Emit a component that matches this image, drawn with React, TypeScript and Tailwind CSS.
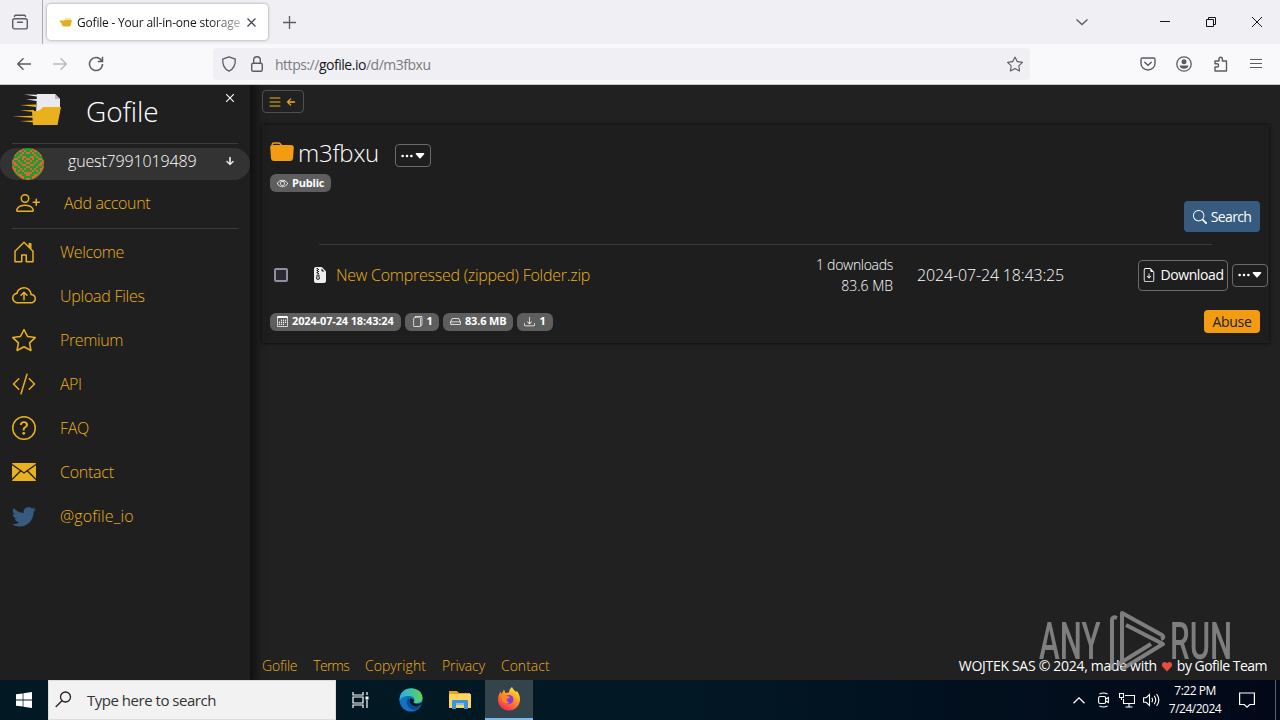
import type { ReactNode } from "react";
import {
  BsArrowDownShort,
  BsArrowLeftShort,
  BsCalendar3,
  BsCaretDownFill,
  BsCloudArrowUp,
  BsCodeSlash,
  BsDownload,
  BsEye,
  BsFileEarmarkArrowDown,
  BsFileEarmarkZipFill,
  BsFiles,
  BsHdd,
  BsHouseDoor,
  BsList,
  BsPersonPlus,
  BsQuestionCircle,
  BsSearch,
  BsStar,
  BsThreeDots,
  BsTwitter,
} from "react-icons/bs";

function EnvelopeIcon() {
  return (
    <svg viewBox="0 0 24 24">
      <rect y="3" width="24" height="18" rx="1" fill="#eab11f" />
      <path d="M0 4.500l12 8.500 12-8.500M0 19.500l8.500-8.500M24 19.500L15.500 11" fill="none" stroke="#1f1f1f" strokeWidth="1.300" />
    </svg>
  );
}

const navItems = [
  { label: "Welcome", icon: <BsHouseDoor />, className: "tracking-[-0.4px]" },
  { label: "Upload Files", icon: <BsCloudArrowUp />, className: "tracking-[-0.25px]" },
  { label: "Premium", icon: <BsStar />, className: "tracking-[-0.4px]" },
  { label: "API", icon: <BsCodeSlash />, className: "tracking-[-0.5px]" },
  { label: "FAQ", icon: <BsQuestionCircle />, className: "tracking-[-0.3px]" },
  { label: "Contact", icon: <EnvelopeIcon />, className: "tracking-[-0.25px]" },
  { label: "@gofile_io", icon: <BsTwitter className="text-[#375a7f]" />, className: "tracking-[0.15px]" },
];

const footerLinks = [
  { label: "Gofile", className: "tracking-[-0.2px]" },
  { label: "Terms", className: "tracking-[-0.75px]" },
  { label: "Copyright", className: "tracking-[0.05px]" },
  { label: "Privacy", className: "tracking-[-0.1px]" },
  { label: "Contact", className: "tracking-[0px]" },
];

// left half of the identicon, mirrored when drawn
const avatarRows = [
  "00000100",
  "00011010",
  "00100101",
  "01001000",
  "00010110",
  "01100101",
  "10010010",
  "11001001",
  "01100110",
  "10010001",
  "11001010",
  "01010100",
  "00100011",
  "00011001",
  "00001100",
  "00000101",
];

function BrowserTabs() {
  return (
    <div className="flex h-11 bg-[#f0f0f4] text-[#5b5b66]">
      <div className="flex w-[43px] items-center justify-center border-r border-[#a9a9b2] pr-[2px]">
        <svg className="size-4" viewBox="0 0 16 16" fill="none" stroke="currentColor" strokeWidth="1.4">
          <rect x="0.7" y="4.7" width="14.6" height="10.2" rx="2" />
          <path d="M2.5 2.5q0-1.3 1.3-1.3h8.4q1.3 0 1.3 1.3M5.5 8.2h5" strokeLinecap="round" />
        </svg>
      </div>
      <div className="ml-[4px] mt-[4px] flex h-[36px] w-[221px] items-center rounded bg-white pl-3 shadow-[0_0_3px_rgba(0,0,0,0.4)]">
        <svg className="h-3 w-[13px] shrink-0" viewBox="0 0 13 12">
          <path d="M6 2h6v5H6z" fill="#f5e3a8" />
          <path d="M0 4.500h5l1-.5h6.500q.5 0 .3 1l-1 4q-.4 1.500-2 1.500H5q-1.500 0-2-1.500L2.300 7z" fill="#e0b022" />
        </svg>
        <div className="ml-[5px] mt-[2px] w-[164px] overflow-hidden whitespace-nowrap bg-gradient-to-r from-[#15141a] from-80% to-[#15141a]/30 bg-clip-text text-xs tracking-[-0.2px] text-transparent">
          Gofile - Your all-in-one storage
        </div>
        <svg className="ml-[6px] size-[9px] shrink-0" viewBox="0 0 9 9" stroke="#42414d" strokeWidth="1.2">
          <path d="M.5.5l8 8M8.500.5l-8 8" />
        </svg>
      </div>
      <svg className="ml-[15px] mt-4 size-[13px]" viewBox="0 0 13 13" stroke="currentColor" strokeWidth="1.3">
        <path d="M6.500 0v13M0 6.500h13" />
      </svg>
      <div className="ml-auto flex items-center text-[#15141a]">
        <svg className="h-2 w-3" viewBox="0 0 12 8" fill="none" stroke="#5b5b66" strokeWidth="1.4">
          <path d="M.5 1.500l5.500 5 5.500-5" />
        </svg>
        <svg className="ml-[72px] h-[10px] w-[10px]" viewBox="0 0 10 10" stroke="currentColor">
          <path d="M0 4.500h10" />
        </svg>
        <svg className="ml-9 size-[10px]" viewBox="0 0 10 10" fill="none" stroke="currentColor">
          <path d="M.5 2.500h7v7h-7zM2.500 2.500v-2h7v7h-2" />
        </svg>
        <svg className="ml-9 mr-[18px] size-[10px]" viewBox="0 0 10 10" stroke="currentColor">
          <path d="M0 0l10 10M10 0L0 10" />
        </svg>
      </div>
    </div>
  );
}

function BrowserToolbar() {
  return (
    <div className="flex h-10 items-center bg-[#f9f9fb] text-[#5b5b66]">
      <svg className="ml-[17px] size-[14px]" viewBox="0 0 14 14" fill="none" stroke="currentColor" strokeWidth="1.4">
        <path d="M14 7H.8M6.500 1.200L.8 7l5.700 5.800" />
      </svg>
      <svg className="ml-[22px] size-[14px] opacity-40" viewBox="0 0 14 14" fill="none" stroke="currentColor" strokeWidth="1.4">
        <path d="M0 7h13.200M7.500 1.200L13.200 7l-5.700 5.800" />
      </svg>
      <svg className="ml-[21px] size-4" viewBox="0 0 16 16" fill="none" stroke="currentColor" strokeWidth="1.5">
        <path d="M13.500 4.600A6.500 6.500 0 1 0 14.500 8M14.500.8v4.700H9.800" />
      </svg>
      <div className="ml-[109px] flex h-8 w-[817px] items-center rounded bg-[#f0f0f4] pl-2">
        <svg className="size-4" viewBox="0 0 16 16" fill="none" stroke="currentColor" strokeWidth="1.3">
          <path d="M8 .8l6.300 2.400c.3 5.300-1.500 9.600-6.300 12C3.200 12.800 1.400 8.500 1.700 3.200z" strokeLinejoin="round" />
        </svg>
        <svg className="ml-3 size-4" viewBox="0 0 16 16" fill="none" stroke="currentColor" strokeWidth="1.4">
          <rect x="2.700" y="7.200" width="10.600" height="8" rx="1.500" />
          <path d="M4.700 7V4a3.300 3.300 0 0 1 6.600 0v3" />
        </svg>
        <span className="ml-[10px] mt-[2px] text-sm tracking-[-0.48px] text-[#7a7a82]">
          https://<span className="text-[#15141a]">gofile.io</span>/d/m3fbxu
        </span>
        <BsStar className="ml-auto mr-[7px] size-4" />
      </div>
      <div className="ml-auto flex items-center gap-5 pr-4">
        <svg className="size-4" viewBox="0 0 16 16" fill="none" stroke="currentColor" strokeWidth="1.4" strokeLinecap="round">
          <path d="M2.500 2h11q1.500 0 1.500 1.500V7.500a7 6.500 0 0 1-14 0v-4Q1 2 2.500 2z" />
          <path d="M4.700 6.300L8 9.300l3.300-3" />
        </svg>
        <svg className="size-4" viewBox="0 0 16 16" fill="none" stroke="currentColor" strokeWidth="1.3">
          <circle cx="8" cy="8" r="7.200" />
          <circle cx="8" cy="5.800" r="2.500" fill="currentColor" stroke="none" />
          <path d="M3.500 9.500h9q-.8 3.300-4.500 3.300t-4.500-3.300z" fill="currentColor" stroke="none" />
        </svg>
        <svg className="size-4" viewBox="0 0 16 16" fill="none" stroke="currentColor" strokeWidth="1.4" strokeLinejoin="round">
          <path d="M3 5h4V3a1.700 1.700 0 0 1 3.400 0v2H14.500v10H3v-4h2a1.600 1.600 0 0 0 0-3.200H3z" />
        </svg>
        <svg className="size-4" viewBox="0 0 16 16" stroke="currentColor" strokeWidth="1.200">
          <path d="M2 3.500h12M2 7.500h12M2 11.500h12" />
        </svg>
      </div>
    </div>
  );
}

function GofileLogo() {
  return (
    <svg className="h-[34px] w-[50px]" viewBox="0 0 50 34">
      <path d="M25 1h18l5 5v14H24z" fill="#e9e9ee" />
      <path d="M43 1v5h5z" fill="#b9b9c4" />
      <path d="M20 18h5l3-1 3-3h18l-3.500 18H21z" fill="#eab11f" />
      <path d="M8 12l16-.5v2.500zM8 17.500l14-.500v2zM0 23.500l21-.7v2zM8 28l14-.5v2z" fill="#eab11f" />
      <path d="M12 1.500l14 .2v2zM14 6.500l11-.5v2z" fill="#e9e9ee" />
    </svg>
  );
}

function Avatar() {
  return (
    <svg className="size-8 rounded-full" viewBox="0 0 16 16" shapeRendering="crispEdges">
      <rect width="16" height="16" fill="#1f9a35" />
      {avatarRows.map((row, y) =>
        row.split("").map((cell, x) =>
          cell === "1" ? (
            <g key={`${x}-${y}`} fill="#e0662c">
              <rect x={x} y={y} width="1" height="1" />
              <rect x={15 - x} y={y} width="1" height="1" />
            </g>
          ) : null
        )
      )}
    </svg>
  );
}

function Sidebar() {
  return (
    <aside className="z-10 w-[250px] shrink-0 bg-[#1f1f1f] text-[#eab11f] shadow-[3px_0_8px_3px_rgba(0,0,0,0.5)]">
      <div className="mx-3 flex h-[59px] items-start border-b border-[#3c3c3c] pt-2">
        <GofileLogo />
        <span className="ml-6 mt-[4px] text-[28px] leading-7 font-light tracking-[-0.1px] text-white">Gofile</span>
        <svg className="ml-auto mr-1 mt-[1px] size-2" viewBox="0 0 8 8" stroke="#fff" strokeWidth="1.1">
          <path d="M0 0l8 8M8 0L0 8" />
        </svg>
      </div>
      <div className="mt-1 flex h-8 items-center rounded-full bg-[#333] pl-3 text-white">
        <Avatar />
        <span className="ml-6 mb-[6px] font-light tracking-[-0.15px]">guest7991019489</span>
        <BsArrowDownShort className="ml-auto mr-3 mb-[6px] size-4" stroke="currentColor" strokeWidth="0.5" />
      </div>
      <div className="mx-3 flex h-[49px] items-center border-b border-[#3c3c3c] pb-[3px]">
        <BsPersonPlus className="ml-1 size-6" />
        <span className="ml-6 font-light tracking-[-0.35px]">Add account</span>
      </div>
      <nav className="pt-[1px]">
        {navItems.map((item) => (
          <a key={item.label} className="flex h-11 items-center pl-3 [&>svg]:size-6">
            {item.icon}
            <span className={`ml-6 mb-[1px] font-light ${item.className}`}>{item.label}</span>
          </a>
        ))}
      </nav>
    </aside>
  );
}

function Badge({ icon, children }: { icon: ReactNode; children: ReactNode }) {
  return (
    <span className="flex h-[18px] items-center gap-1 rounded-md bg-[#5e5e5e] px-[7px] text-[11px] font-bold text-white">
      {icon}
      {children}
    </span>
  );
}

function MenuButton() {
  return (
    <button className="flex h-[23px] w-9 items-center justify-center rounded border border-[#6a6a6a] text-white">
      <BsThreeDots className="size-[14px]" />
      <BsCaretDownFill className="size-3" />
    </button>
  );
}

function FolderCard() {
  return (
    <section className="h-[218px] w-[1007px] bg-[#1e1e1e] px-2 pt-3 shadow-[0_0_4px_rgba(0,0,0,0.8)]">
      <div className="flex h-8 items-center">
        <svg className="mb-[2px] size-6" viewBox="0 0 24 24" fill="#f39c12">
          <path d="M2 5.500Q2 3 4 3h4.500q1 0 2 1l1 1" fill="none" stroke="#f39c12" strokeWidth="1.300" />
          <path d="M3 5h18q3 0 2.800 3l-.8 10.500q-.3 2.500-3 2.500H4q-2.700 0-3-2.500L.2 7Q0 5 3 5z" />
        </svg>
        <span className="mb-[1px] ml-1 w-[81px] text-2xl font-light tracking-[-0.25px] text-white">m3fbxu</span>
        <span className="ml-4 mt-[5px]">
          <MenuButton />
        </span>
      </div>
      <div className="mt-[5px] flex">
        <Badge icon={<BsEye className="size-[11px]" />}>
          <span className="tracking-[-0.2px]">Public</span>
        </Badge>
      </div>
      <div className="mr-[1px] mt-[9px] flex justify-end">
        <button className="flex h-[31px] w-[76px] items-center justify-center gap-1 rounded bg-[#375a7f] text-sm text-white">
          <BsSearch className="size-[14px]" />
          <span className="tracking-[-0.6px]">Search</span>
        </button>
      </div>
      <hr className="ml-[49px] mr-[49px] mt-3 border-[#3a3a3a]" />
      <div className="-mr-2 flex h-[60px] items-center pr-[1px] text-white">
        <span className="ml-1 size-[14px] rounded-[2px] border-2 border-[#8f8f9d] bg-[#2b2a33]" />
        <BsFileEarmarkZipFill className="ml-6 size-4 text-[#eee]" />
        <span className="ml-2 font-light tracking-[-0.25px] text-[#eab11f]">New Compressed (zipped) Folder.zip</span>
        <div className="ml-auto text-right text-sm leading-[21px] font-light">
          <div className="tracking-[-0.3px]">1 downloads</div>
          <div>83.6 MB</div>
        </div>
        <span className="ml-6 w-[221px] font-light tracking-[-0.15px]">2024-07-24 18:43:25</span>
        <button className="flex h-[31px] w-[90px] items-center justify-center gap-1 rounded border border-[#6a6a6a] text-sm">
          <BsFileEarmarkArrowDown className="size-[14px]" />
          <span className="tracking-[-0.4px]">Download</span>
        </button>
        <span className="ml-1">
          <MenuButton />
        </span>
      </div>
      <div className="mt-[5px] flex items-center gap-1">
        <Badge icon={<BsCalendar3 className="size-[11px]" />}>
          <span className="tracking-[-0.14px]">2024-07-24 18:43:24</span>
        </Badge>
        <Badge icon={<BsFiles className="size-[11px]" />}>
          <span className="-mr-[1px]">1</span>
        </Badge>
        <Badge icon={<BsHdd className="size-[11px]" />}>
          <span className="tracking-[-0.15px]">83.6 MB</span>
        </Badge>
        <Badge icon={<BsDownload className="size-[11px]" />}>1</Badge>
        <button className="ml-auto mr-[1px] h-[23px] w-14 rounded bg-[#f39c12] text-sm tracking-[-0.3px] text-[#222]">
          Abuse
        </button>
      </div>
    </section>
  );
}

function Watermark() {
  return (
    <div className="absolute right-0 bottom-0 flex h-[74px] w-[241px] pt-1 text-[#969696] opacity-80">
      <span className="mt-[9px] w-[70px] origin-left scale-x-[0.6] text-[52px] leading-[46px] font-[Roboto] font-medium">
        ANY
      </span>
      <svg className="h-[62px] w-[57px] shrink-0" viewBox="0 0 57 62" fill="none" stroke="currentColor" strokeWidth="4">
        <path d="M8 8Q3 6 3 10v50" />
        <path d="M13 51V3l40 22q3 3-1 4" strokeLinejoin="round" />
        <path d="M17 15l37 19-41 25" strokeLinejoin="round" />
        <path d="M42 34L8 55" />
      </svg>
      <span className="mt-[9px] ml-1 w-[64px] origin-left scale-x-[0.6] text-[52px] leading-[46px] font-[Roboto] font-medium">
        RUN
      </span>
    </div>
  );
}

function EdgeIcon() {
  return (
    <svg className="size-6" viewBox="0 0 24 24">
      <defs>
        <linearGradient id="edgeTop" x1="0" x2="1">
          <stop offset="0" stopColor="#28aee5" />
          <stop offset="1" stopColor="#5fd35a" />
        </linearGradient>
      </defs>
      <circle cx="12" cy="12" r="11.500" fill="#1272c4" />
      <path d="M.7 10C2-3.500 23.500-2.500 23.500 10c0 5-6 6-9 4.500 2-1.500 1.500-6-3.500-6.500C6 7.500 2 9 .6 13z" fill="url(#edgeTop)" />
      <path d="M9.500 9.500c-4 4-.5 11.500 5 12.500 3 0 5.500-1.500 7-4-4 2.500-11 .5-11-5z" fill="#0b4a94" />
      <path d="M11 10.500c-2 4 2 8.500 7 8.300l4.500-2.300 1.500-3c-3 3.200-8.500 2.700-9.700 1 1.200-1.500.7-4.500-3.300-4z" fill="#021923" />
    </svg>
  );
}

function ExplorerIcon() {
  return (
    <svg className="h-[20px] w-[22px]" viewBox="0 0 22 20">
      <path d="M0 1h8l2 2h11v6H0z" fill="#e8a317" />
      <path d="M0 4h22v14H0z" fill="#fdd560" />
      <path d="M3 11q0-1 1-1h14q1 0 1 1v8h-4v-4H7v4H3z" fill="#3c94dc" />
      <path d="M7 13h8v2H7z" fill="#7cc3f3" />
    </svg>
  );
}

function FirefoxIcon() {
  return (
    <svg className="size-6" viewBox="0 0 24 24">
      <defs>
        <linearGradient id="fox" x1="0.8" y1="0" x2="0.2" y2="1">
          <stop offset="0" stopColor="#fff04a" />
          <stop offset="0.4" stopColor="#ff9a1f" />
          <stop offset="1" stopColor="#f5205b" />
        </linearGradient>
      </defs>
      <path d="M15 0c1 3 3 3.500 4 5l1-1c2 3 3.200 5.500 3 9-.5 6-5 10.500-11 10.500S1 19 1 12.500c0-3 1-5.500 2.500-8l1 2.500L7 2.500 8.500 6 12 5.500C12 3.500 13 1.500 15 0z" fill="url(#fox)" />
      <circle cx="12" cy="12.500" r="4.500" fill="#8a3ad8" />
      <path d="M4 8q4-1.500 6 1l3 .7q-1 1.800-3.500 2.300 0 3 3 3.800Q8 18 5 13z" fill="#ff8a1c" />
    </svg>
  );
}

function Taskbar() {
  return (
    <div className="flex h-10 items-center bg-gradient-to-r from-[#021923] via-[#021925] to-[#020818] text-white">
      <div className="flex w-12 justify-center">
        <svg className="size-4" viewBox="0 0 16 16" fill="#fff">
          <path d="M0 2.300l6.700-.9v6.200H0zM7.400 1.300L16 0v7.600H7.400zM0 8.400h6.700v6.200L0 13.700zM7.400 8.400H16V16l-8.600-1.300z" />
        </svg>
      </div>
      <div className="flex h-10 w-[288px] items-center border border-[#dcdcdc] bg-[#f2f2f2] pl-[6px] text-[#333]">
        <svg className="mb-[1px] size-[17px]" viewBox="0 0 17 17" fill="none" stroke="#222" strokeWidth="1.300">
          <circle cx="10.500" cy="6" r="5" />
          <path d="M7 9.700L.7 16" />
        </svg>
        <span className="ml-[15px] text-[15px] tracking-[-0.48px]">Type here to search</span>
      </div>
      <div className="flex w-12 justify-center">
        <svg className="h-4 w-[17px]" viewBox="0 0 17 16" fill="none" stroke="#fff" strokeWidth="1.200">
          <path d="M1 0v3h10V0M1 16v-3h10v3M1 5h10v6H1zM15 0v3M15 8v8" />
          <path d="M13.500 4.500h3v3h-3z" fill="#fff" stroke="none" />
        </svg>
      </div>
      <div className="flex w-[54px] justify-center">
        <EdgeIcon />
      </div>
      <div className="flex w-[47px] justify-center pr-[4px]">
        <ExplorerIcon />
      </div>
      <div className="flex h-10 w-12 items-center justify-center border-b-2 border-[#76b9ed] bg-[#33444d]">
        <FirefoxIcon />
      </div>
      <div className="ml-auto flex h-10 items-center">
        <svg className="h-[7px] w-3" viewBox="0 0 12 7" fill="none" stroke="#fff" strokeWidth="1.300">
          <path d="M.5 6.300L6 .9l5.500 5.400" />
        </svg>
        <svg className="ml-3 h-4 w-[13px]" viewBox="0 0 13 16" fill="none" stroke="#fff" strokeWidth="1.100">
          <rect x="1.600" y="4.500" width="7" height="7" rx="1.500" />
          <path d="M8.600 7l2.800-1.500v5L8.600 9M2.500 2q4-2 8 0M2.500 14q4 2 8 0" />
        </svg>
        <svg className="ml-[9px] size-4" viewBox="0 0 16 16" fill="none" stroke="#fff" strokeWidth="1.100">
          <path d="M6 3.500h9.500v8H4.500V7M10 11.500V15M6.500 15h7M.5 1.500h4v4h-4zM2.500 5.500V8" />
        </svg>
        <svg className="ml-2 h-[14px] w-[17px]" viewBox="0 0 17 14" fill="none" stroke="#fff" strokeWidth="1.100">
          <path d="M.6 4.700h2.600L6.500 1.500v11L3.200 9.300H.6zM8.800 4.700q1.500 2.300 0 4.600M11.200 2.700q3 4.300 0 8.600M13.600 1q4.500 6 0 12" />
        </svg>
        <div className="ml-[7px] w-[56px] text-center text-xs leading-[18px] tracking-[-0.5px] whitespace-nowrap">
          <div>7:22 PM</div>
          <div>7/24/2024</div>
        </div>
        <svg className="ml-[16px] h-4 w-4" viewBox="0 0 16 16" fill="none" stroke="#fff" strokeWidth="1.200">
          <path d="M.6 1h14.800v11.500h-4.600L8 15.200l-2.800-2.700H.6z" />
        </svg>
        <div className="ml-[20px] mr-1 h-10 border-l border-[#59616b]" />
      </div>
    </div>
  );
}

export default function App() {
  return (
    <div className="flex h-[720px] w-[1280px] flex-col overflow-hidden font-['Open_Sans',sans-serif] text-base">
      <BrowserTabs />
      <BrowserToolbar />
      <div className="relative flex h-[596px] overflow-hidden border-t border-[#c4c8c8] bg-[#212121]">
        <Sidebar />
        <main className="flex flex-1 flex-col pl-3 pt-[5px]">
          <button className="mb-3 flex h-[23px] w-[42px] items-center justify-center rounded border border-[#505050] text-[#eab11f]">
            <BsList className="size-4" />
            <BsArrowLeftShort className="size-4" stroke="currentColor" strokeWidth="0.5" />
          </button>
          <FolderCard />
          <footer className="mt-auto flex h-[28px] items-center justify-between pr-[13px] text-sm font-light text-white">
            <div className="flex gap-4 text-[#eab11f]">
              {footerLinks.map((link) => (
                <a key={link.label} className={link.className}>
                  {link.label}
                </a>
              ))}
            </div>
            <div className="flex items-center gap-1 font-normal">
              <span className="tracking-[-0.3px]">WOJTEK SAS © 2024, made with</span>
              <svg className="h-[11px] w-3" viewBox="0 0 12 12">
                <path d="M6 11.500L1 6C-1 3 3-1 6 2.500 9-1 13 3 11 6z" fill="#e74c3c" />
              </svg>
              <span className="tracking-[-0.52px]">by Gofile Team</span>
            </div>
          </footer>
        </main>
        <Watermark />
      </div>
      <Taskbar />
    </div>
  );
}
